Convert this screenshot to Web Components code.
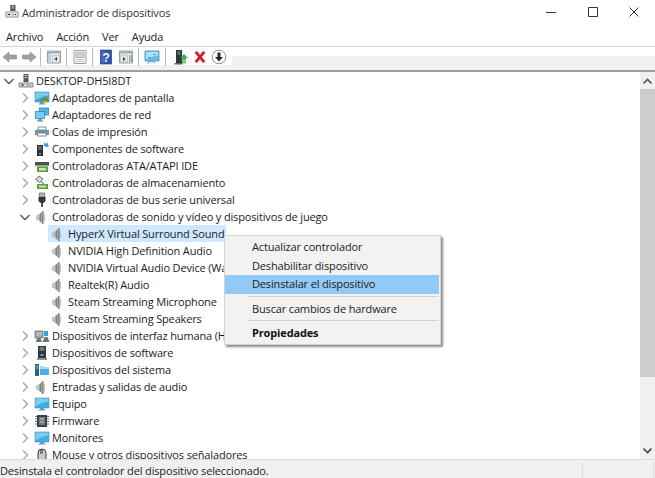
<!DOCTYPE html>
<html lang="es">
<head>
<meta charset="utf-8">
<title>Administrador de dispositivos</title>
<style>
  html, body { margin: 0; height: 100%; background: #fff; overflow: hidden; }
  body { font-family: "Open Sans", "Liberation Sans", sans-serif; font-size: 11px; letter-spacing: -0.15px; color: #1c1c1c; }
</style>
</head>
<body>
<dm-window>
  <dm-titlebar slot="title">Administrador de dispositivos</dm-titlebar>
  <dm-menubar slot="menu">
    <span>Archivo</span><span>Acción</span><span>Ver</span><span>Ayuda</span>
  </dm-menubar>
  <dm-toolbar slot="tools">
    <tb-button icon="back" narrow></tb-button>
    <tb-button icon="forward" narrow></tb-button>
    <tb-sep></tb-sep>
    <tb-button icon="console"></tb-button>
    <tb-sep></tb-sep>
    <tb-button icon="props"></tb-button>
    <tb-sep></tb-sep>
    <tb-button icon="help"></tb-button>
    <tb-button icon="panel"></tb-button>
    <tb-sep></tb-sep>
    <tb-button icon="scan"></tb-button>
    <tb-sep wide></tb-sep>
    <tb-button icon="update" narrow></tb-button>
    <tb-button icon="remove" narrow></tb-button>
    <tb-button icon="down" narrow></tb-button>
  </dm-toolbar>
  <dm-tree slot="tree">
    <tree-row level="0" state="open" icon="computer">DESKTOP-DH5I8DT</tree-row>
    <tree-row level="1" state="closed" icon="display">Adaptadores de pantalla</tree-row>
    <tree-row level="1" state="closed" icon="network">Adaptadores de red</tree-row>
    <tree-row level="1" state="closed" icon="printer">Colas de impresión</tree-row>
    <tree-row level="1" state="closed" icon="component">Componentes de software</tree-row>
    <tree-row level="1" state="closed" icon="ata">Controladoras ATA/ATAPI IDE</tree-row>
    <tree-row level="1" state="closed" icon="storage">Controladoras de almacenamiento</tree-row>
    <tree-row level="1" state="closed" icon="usb">Controladoras de bus serie universal</tree-row>
    <tree-row level="1" state="open" icon="speaker">Controladoras de sonido y vídeo y dispositivos de juego</tree-row>
    <tree-row level="2" icon="speaker" selected>HyperX Virtual Surround Sound</tree-row>
    <tree-row level="2" icon="speaker">NVIDIA High Definition Audio</tree-row>
    <tree-row level="2" icon="speaker">NVIDIA Virtual Audio Device (Wa</tree-row>
    <tree-row level="2" icon="speaker">Realtek(R) Audio</tree-row>
    <tree-row level="2" icon="speaker">Steam Streaming Microphone</tree-row>
    <tree-row level="2" icon="speaker">Steam Streaming Speakers</tree-row>
    <tree-row level="1" state="closed" icon="hid">Dispositivos de interfaz humana (H</tree-row>
    <tree-row level="1" state="closed" icon="software">Dispositivos de software</tree-row>
    <tree-row level="1" state="closed" icon="system">Dispositivos del sistema</tree-row>
    <tree-row level="1" state="closed" icon="speaker">Entradas y salidas de audio</tree-row>
    <tree-row level="1" state="closed" icon="display-plain">Equipo</tree-row>
    <tree-row level="1" state="closed" icon="firmware">Firmware</tree-row>
    <tree-row level="1" state="closed" icon="display-plain">Monitores</tree-row>
    <tree-row level="1" state="closed" icon="mouse">Mouse y otros dispositivos señaladores</tree-row>
  </dm-tree>
  <dm-scrollbar slot="scroll"></dm-scrollbar>
  <dm-statusbar slot="status">Desinstala el controlador del dispositivo seleccionado.</dm-statusbar>
  <dm-contextmenu slot="popup">
    <menu-item>Actualizar controlador</menu-item>
    <menu-item>Deshabilitar dispositivo</menu-item>
    <menu-item active>Desinstalar el dispositivo</menu-item>
    <menu-sep></menu-sep>
    <menu-item>Buscar cambios de hardware</menu-item>
    <menu-sep></menu-sep>
    <menu-item bold>Propiedades</menu-item>
  </dm-contextmenu>
</dm-window>

<script>
(() => {
  // every icon sits in a 16x16 box
  const speaker = `
    <path d="M2 6h2.500v5H2z" fill="#c2c6c4"/>
    <path d="M4.500 5.500 9 2v13l-4.500-3.500z" fill="#a3a8a6"/>
    <path d="M9 2v13" stroke="#5f6664"/>
    <path d="M6.500 4.500v8" stroke="#7d8482"/>
    <path d="M10.500 5v7" stroke="#bcc0be"/>`;
  const screen = (fill, extra = '') => `
    <rect x="1" y="2" width="14" height="10" fill="${fill}" stroke="#3d8fc4" stroke-width=".6"/>
    <path d="M1.500 2.500h13v3c-5 .5-9 2-13 5z" fill="#a9e0f7" opacity=".6"/>
    <path d="M6 12h4v1.500H6zM4.500 13.500h7v1h-7z" fill="#5d9fc9"/>${extra}`;
  const ICONS = {
    computer: `
      <path d="M5.500 1h5v8h-5z" fill="#55595c"/>
      <path d="M6.500 2.500h3M6.500 4.500h3" stroke="#c8cccc"/>
      <path d="M1 10h14v4H1z" fill="#d9dcdc" stroke="#6a6e70" stroke-width=".8"/>
      <path d="M3 12h3M9 12h1M11.500 12h1" stroke="#2a2a2a" stroke-width="1.200"/>`,
    display: screen('#3fa7dc', `<path d="M7 11l3-4 4 1v4H7z" fill="#6f8f35"/><path d="M9 11h4v2H9z" fill="#e3b23c"/>`),
    'display-plain': screen('#43aee4'),
    network: `
      <rect x="5.500" y="1" width="9" height="7" fill="#58b4e6" stroke="#2f86bd" stroke-width=".8"/>
      <rect x="1.500" y="4.500" width="9" height="7" fill="#7cc8ee" stroke="#2f86bd" stroke-width=".8"/>
      <path d="M4.500 11.500h3v2h-3zM3 13.500h6v1H3z" fill="#4b98c6"/>`,
    printer: `
      <path d="M4 3h8v3H4z" fill="#fff" stroke="#6a6f72" stroke-width=".8"/>
      <path d="M1 6h14v5h-2V9H3v2H1z" fill="#8a959b"/>
      <path d="M3.500 9h9v3h-9z" fill="#fff" stroke="#5e686e" stroke-width=".8"/>
      <path d="M2 6.500h12" stroke="#2f9bd0"/>`,
    component: `
      <path d="M3 4h6v11H3z" fill="#2b2e30"/>
      <path d="M4 6h4M4 8h4" stroke="#8f979a"/>
      <path d="M5 12h2v1.500H5z" fill="#38a0d8"/>
      <path d="M10 1l1 1.500h2L14 1v3l1 1-1 1h-2l-2-1z" fill="#3f9ddb"/>`,
    ata: `
      <path d="M1 4h14v3H1z" fill="#4b4f52"/>
      <path d="M1 7h14v1.500H1z" fill="#9aa0a2"/>
      <path d="M3 8.500h11V14H3z" fill="#5d9c45"/>
      <path d="M5 10h7v2.500H5z" fill="#cfe3a8"/>`,
    storage: `
      <path d="M1.500 4.500 5 1l4 3-3.500 3.500z" fill="#d5d8d8" stroke="#4d5356" stroke-width=".8"/>
      <path d="M3 9h11v5H3z" fill="#5f9c45"/>
      <path d="M5 10.500h7v2H5z" fill="#d5e6ad"/>
      <path d="M7 7l3 1.500" stroke="#4d5356"/>`,
    usb: `
      <path d="M5.500 1h5v4h-5z" fill="#b7bbbd" stroke="#53585b" stroke-width=".7"/>
      <path d="M4.500 5h7v4l-2 2H6.500l-2-2z" fill="#33373a"/>
      <path d="M7 11h2v4H7z" fill="#55595c"/>`,
    speaker,
    hid: `
      <path d="M1 3h8v7H1z" fill="#9fa6aa" stroke="#5d6468" stroke-width=".7"/>
      <path d="M2.500 5h5M2.500 7h5" stroke="#eef0f0" stroke-dasharray="1 1"/>
      <path d="M1.500 14 3.500 10h3L8 14zM8.500 14l2-5h3l2 5z" fill="#6c7478"/>
      <path d="M10 3h4v5h-4z" fill="#3fa0da"/>`,
    software: `
      <path d="M4 1h8v12H4z" fill="#33373a"/>
      <path d="M5.500 3h5M5.500 5h5" stroke="#aab0b3"/>
      <path d="M6.500 9h3v2h-3z" fill="#3fa0da"/>
      <path d="M3 13h10v2H3z" fill="#8d9497"/>`,
    system: `
      <path d="M1 2h4v12H1z" fill="#2f5f86"/>
      <path d="M2 4h2M2 6h2" stroke="#a7c9df"/>
      <path d="M6 4h3l1 1h5v8H6z" fill="#4cb0e6"/>
      <path d="M6 4h3l1 1h5v2H6z" fill="#a6dcf5"/>`,
    firmware: `
      <path d="M3 2h10v12H3z" fill="#3d4144"/>
      <path d="M5 4h6v8H5z" fill="#74797c"/>
      <path d="M1 3.500h2M1 6h2M1 8.500h2M1 11h2M13 3.500h2M13 6h2M13 8.500h2M13 11h2" stroke="#6a6f72"/>
      <path d="M6 6h4M6 9h4" stroke="#c4c8ca"/>`,
    mouse: `
      <path d="M4 6a4 4 0 0 1 8 0v5a4 4 0 0 1-8 0z" fill="#c9cdcf" stroke="#3a3f42"/>
      <path d="M8 2v5" stroke="#3a3f42"/>
      <path d="M6 3h1.500v4H6z" fill="#6e7478"/>`,
    // toolbar
    back: `<path d="M1 8l6-5v3h7.500v4H7v3z" fill="#9aa19f" stroke="#868c8a" stroke-width=".6"/>`,
    forward: `<path d="M15 8 9 3v3H1.500v4H9v3z" fill="#9aa19f" stroke="#868c8a" stroke-width=".6"/>`,
    console: `
      <path d="M1.500 2h13v12h-13z" fill="#eef0f0" stroke="#9aa0a2"/>
      <path d="M2 2.500h12v2H2z" fill="#9fa6a9"/>
      <path d="M2 5h3v8.500H2z" fill="#bcd3df"/>
      <path d="M6.500 6.500h7v7h-7z" fill="#dfe8ec" stroke="#aab2b5" stroke-width=".6"/>
      <path d="M11 8 8.500 10l2.500 2z" fill="#2f3436"/>`,
    props: `
      <path d="M2 1.500h12v13H2z" fill="#f1f3f3" stroke="#a0a6a8"/>
      <path d="M4 3.500h8v5H4z" fill="#dfe3e4" stroke="#a0a6a8" stroke-width=".7"/>
      <path d="M4.500 10.500h7M4.500 12.500h7M5.500 5h5M5.500 7h5" stroke="#9aa0a2" stroke-dasharray="1 1"/>`,
    help: `
      <path d="M2.500 1h11v14h-11z" fill="#2f56ad" stroke="#223f87" stroke-width=".7"/>
      <path d="M3.500 2h3v12h-3z" fill="#5677c4" opacity=".6"/>
      <text x="8" y="12.500" text-anchor="middle" font-family="Liberation Sans, sans-serif" font-size="12" font-weight="700" fill="#fff">?</text>`,
    panel: `
      <path d="M1.500 2h13v12h-13z" fill="#eef0f0" stroke="#9aa0a2"/>
      <path d="M2 2.500h12v2H2z" fill="#9fa6a9"/>
      <path d="M2.500 6h7v7h-7z" fill="#dfe8ec" stroke="#aab2b5" stroke-width=".6"/>
      <path d="M5 8l2.500 2L5 12z" fill="#2f3436"/>
      <path d="M11 6h1.500v7H11zM13 6h1v7h-1z" fill="#9aa0a2"/>`,
    scan: `
      <path d="M1 2h14v10H1z" fill="#6dbde8" stroke="#3c8fc4" stroke-width=".8"/>
      <path d="M2 3h12v3.500c-4 .5-8 1.500-12 4z" fill="#b3e1f6"/>
      <path d="M6 12l-2.500 3M4 8.500h3M9 5.500h3" stroke="#4a9bcc"/>
      <path d="M6.500 12.500h5v1h-5z" fill="#72a9ca"/>`,
    update: `
      <path d="M3 1h6v13H3z" fill="#2f3a35"/>
      <path d="M4.500 3h3M4.500 5h3" stroke="#9aa5a0"/>
      <path d="M1.500 14h8v1.500h-8z" fill="#55605a"/>
      <path d="M11 5l4 4h-2.200v2.500H9.200V9H7z" fill="#3fae55"/>
      <path d="M9 12h4v2.500H9z" fill="#6cc47a"/>`,
    remove: `<path d="M2.500 3.500 5 2l3 3.800L11 2l2.500 1.500L9.800 8l3.700 4.500L11 14 8 10.200 5 14l-2.500-1.500L6.200 8z" fill="#d3222a"/>`,
    down: `
      <circle cx="8" cy="8" r="6.800" fill="#fff" stroke="#8b8f90"/>
      <path d="M6.500 3.500h3V8H12l-4 4.500L4 8h2.500z" fill="#26292a"/>`,
  };

  // small helper so every element below stays a few lines
  const define = (name, html) => {
    const template = document.createElement('template');
    template.innerHTML = html;
    customElements.define(name, class extends HTMLElement {
      constructor() {
        super();
        this.attachShadow({ mode: 'open' }).append(template.content.cloneNode(true));
      }
    });
  };

  const iconSvg = (name) =>
    `<svg width="16" height="16" viewBox="0 0 16 16" aria-hidden="true">${ICONS[name] || ''}</svg>`;

  define('dm-window', `
    <style>
      :host { display: grid; position: relative; width: 655px; height: 478px; overflow: hidden;
        grid-template-rows: 28px 18px 26px 387px 19px; grid-template-columns: 1fr 15px; background: #fff; }
    </style>
    <slot name="title"></slot><slot name="menu"></slot><slot name="tools"></slot>
    <slot name="tree"></slot><slot name="scroll"></slot>
    <slot name="status"></slot>
    <slot name="popup"></slot>
  `);

  define('dm-titlebar', `
    <style>
      :host { display: flex; align-items: center; grid-column: 1 / -1; padding-bottom: 4px; box-sizing: border-box; color: #303030; }
      .app { width: 16px; height: 16px; margin: 0 1px 0 5px; }
      .text { flex: 1; }
      .ctl { width: 41.5px; display: flex; justify-content: center; flex: none; }
    </style>
    <span class="app">
      <svg width="14" height="14" viewBox="0 0 16 16" aria-hidden="true">
        <path d="M6 1h6v7H6z" fill="#54585a"/>
        <path d="M7.500 2.500h3M7.500 4.500h3" stroke="#c8cccc"/>
        <path d="M1 9h14v6H1z" fill="#dfe1e1" stroke="#777b7d" stroke-width=".8"/>
        <path d="M3 12h3M9 12h1M11.500 12h1" stroke="#2a2a2a" stroke-width="1.200"/>
      </svg>
    </span>
    <span class="text"><slot></slot></span>
    <span class="ctl"><svg width="10" height="10" viewBox="0 0 10 10"><path d="M0 5.500h10" stroke="#333" fill="none"/></svg></span>
    <span class="ctl"><svg width="10" height="10" viewBox="0 0 10 10"><path d="M.5.500h9v9h-9z" stroke="#333" fill="none"/></svg></span>
    <span class="ctl"><svg width="10" height="10" viewBox="0 0 10 10"><path d="M.5.500l9 9M9.500.500l-9 9" stroke="#333" fill="none"/></svg></span>
  `);

  define('dm-menubar', `
    <style>
      :host { display: flex; align-items: center; grid-column: 1 / -1; gap: 13px; padding: 0 0 2px 6px; box-sizing: border-box; color: #222; }
      ::slotted(span) { display: block; }
    </style>
    <slot></slot>
  `);

  define('dm-toolbar', `
    <style>
      :host { display: flex; align-items: flex-start; grid-column: 1 / -1; box-sizing: border-box;
        border-top: 1px solid #d6d6d6; border-bottom: 2px solid #9f9f9f;
        background:
          linear-gradient(#fff, #fff) left top / 232px 18px no-repeat,
          linear-gradient(#fff, #fff) left top / 100% 9px no-repeat,
          #f1f1f1; }
    </style>
    <slot></slot>
  `);

  customElements.define('tb-button', class extends HTMLElement {
    constructor() {
      super();
      this.attachShadow({ mode: 'open' }).innerHTML = `
        <style>
          :host { display: flex; align-items: center; justify-content: center; width: 20px; height: 20px; flex: none; }
          :host([narrow]) { width: 19px; }
        </style>
        ${iconSvg(this.getAttribute('icon'))}`;
    }
  });

  define('tb-sep', `
    <style>
      :host { display: block; width: 1px; height: 18px; margin: 1px 3px 0 2px; background: #b9b9b9; flex: none; }
      :host([wide]) { margin-left: 3px; margin-right: 5px; }
    </style>
  `);

  define('dm-tree', `
    <style>
      :host { display: block; overflow: hidden; background: #fff; }
    </style>
    <slot></slot>
  `);

  customElements.define('tree-row', class extends HTMLElement {
    constructor() {
      super();
      const level = Number(this.getAttribute('level') || 0);
      const state = this.getAttribute('state');
      const chevron = state === 'open'
        ? '<path d="M2.500 5 7 9.500 11.500 5" fill="none" stroke="#555" stroke-width="1.300"/>'
        : state === 'closed'
          ? '<path d="M5 2.500 9.500 7 5 11.500" fill="none" stroke="#a6a6a6" stroke-width="1.300"/>'
          : '';
      this.attachShadow({ mode: 'open' }).innerHTML = `
        <style>
          :host { display: flex; height: 17px; align-items: stretch; padding-left: ${2 + level * 16}px; white-space: nowrap; }
          .chev { width: 14px; flex: none; display: flex; align-items: center; justify-content: center; }
          .item { display: flex; align-items: center; gap: 2px; padding: 0 2px; height: 17px; }
          :host([selected]) .item { background: #cde8ff; }
          svg { flex: none; display: block; }
          .label { line-height: 17px; }
        </style>
        <span class="chev"><svg width="14" height="14" viewBox="0 0 14 14" aria-hidden="true">${chevron}</svg></span>
        <span class="item">${iconSvg(this.getAttribute('icon'))}<span class="label"><slot></slot></span></span>`;
    }
  });

  define('dm-scrollbar', `
    <style>
      :host { display: flex; flex-direction: column; background: #f0f0f0; }
      .btn { height: 17px; display: flex; align-items: center; justify-content: center; flex: none; }
      .thumb { height: 288px; background: #cdcdcd; flex: none; }
      .rest { flex: 1; }
    </style>
    <div class="btn"><svg width="11" height="8" viewBox="0 0 11 8"><path d="M1.500 6.500 5.500 2.500l4 4" fill="none" stroke="#505050" stroke-width="1.600"/></svg></div>
    <div class="thumb"></div>
    <div class="rest"></div>
    <div class="btn"><svg width="11" height="8" viewBox="0 0 11 8"><path d="M1.500 1.500 5.500 5.500l4-4" fill="none" stroke="#404040" stroke-width="1.600"/></svg></div>
  `);

  define('dm-statusbar', `
    <style>
      :host { display: flex; grid-column: 1 / -1; align-items: center; box-sizing: border-box; padding-top: 2px;
        border-top: 1px solid #dcdcdc; background: #f0f0f0; color: #1c1c1c; }
      .text { flex: none; width: 582px; white-space: nowrap; }
      .cell { flex: none; width: 1px; align-self: stretch; background: #dcdcdc; margin-right: 70px; }
    </style>
    <span class="text"><slot></slot></span><span class="cell"></span><span class="cell"></span>
  `);

  define('dm-contextmenu', `
    <style>
      :host { position: absolute; left: 224px; top: 235px; width: 217px; box-sizing: border-box; padding: 2px 1px 1px 0;
        background: #f2f2f2; border: 1px solid #d4d4d4; box-shadow: 2px 2px 2px #8a8a8a; display: block; }
    </style>
    <slot></slot>
  `);

  define('menu-item', `
    <style>
      :host { display: block; height: 18.5px; line-height: 18.5px; padding-left: 27px; color: #222; white-space: nowrap; }
      :host([active]) { background: #91c9f7; }
      :host([bold]) { font-weight: 700; color: #111; }
    </style>
    <slot></slot>
  `);

  define('menu-sep', `
    <style>
      :host { display: block; height: 1px; margin: 2px 1px 3px 23px; background: #d2d2d2; }
    </style>
  `);
})();
</script>
</body>
</html>
